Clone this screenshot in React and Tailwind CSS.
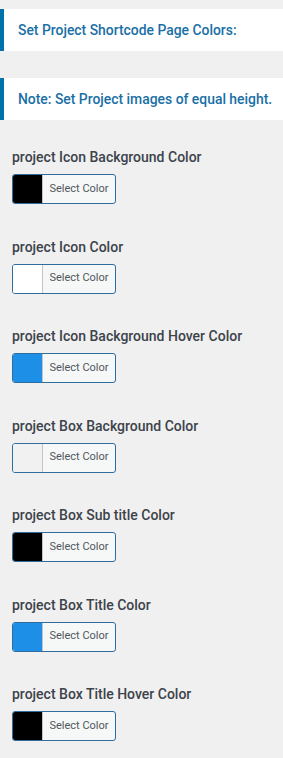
const ROWS = [
  { label: 'project Icon Background Color', color: '#000000' },
  { label: 'project Icon Color', color: '#ffffff' },
  { label: 'project Icon Background Hover Color', color: '#1e8fe6' },
  { label: 'project Box Background Color', color: '#f1f1f1' },
  { label: 'project Box Sub title Color', color: '#000000' },
  { label: 'project Box Title Color', color: '#1e8fe6' },
  { label: 'project Box Title Hover Color', color: '#000000' },
];

function Notice({ children, className }) {
  return (
    <div
      className={`h-[42px] bg-white border-l-4 border-[#0073aa] flex items-center pl-[14px] text-[13.9px] font-medium text-[#1a6fa6] ${className || ''}`}
    >
      {children}
    </div>
  );
}

export default function App() {
  return (
    <div
      className="w-[283px] h-[758px] bg-[#f0f0f1] pt-[9px] overflow-hidden"
      style={{ fontFamily: 'Roboto, "Noto Sans", sans-serif' }}
    >
      <Notice>Set Project Shortcode Page Colors:</Notice>
      <Notice className="mt-[27px]">Note: Set Project images of equal height.</Notice>

      <div className="flex flex-col gap-[32.5px] pt-[27px] pl-3">
        {ROWS.map((row) => (
          <div key={row.label} className="flex flex-col">
            <p className="h-5 leading-5 text-[14px] font-medium text-[#3c434a] whitespace-nowrap">
              {row.label}
            </p>
            <button className="mt-[7px] h-[30px] w-[104px] flex items-stretch rounded-[3px] border border-[#2f6d9e] bg-[#f6f7f7] overflow-hidden">
              <span
                className="w-[30px] border-r border-[#c3c4c7]"
                style={{ backgroundColor: row.color }}
              />
              <span className="flex-1 flex items-center justify-center text-[11px] text-[#50575e]">
                Select Color
              </span>
            </button>
          </div>
        ))}
      </div>
    </div>
  );
}
